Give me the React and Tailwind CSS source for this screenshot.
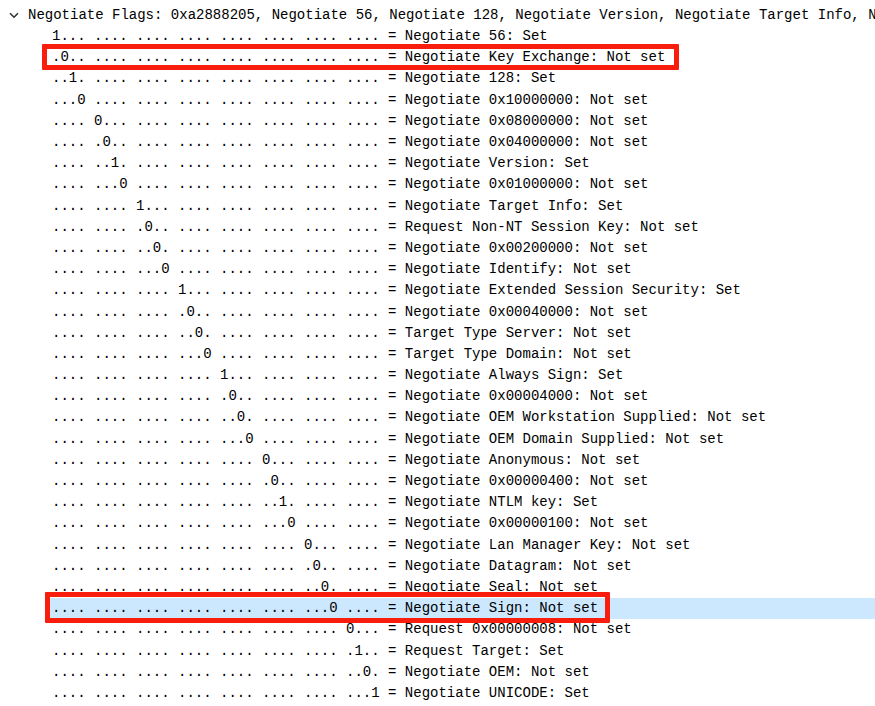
import React from "react";

const FLAGS = 0xa2888205;

const FIELDS = [
  "Negotiate 56",
  "Negotiate Key Exchange",
  "Negotiate 128",
  "Negotiate 0x10000000",
  "Negotiate 0x08000000",
  "Negotiate 0x04000000",
  "Negotiate Version",
  "Negotiate 0x01000000",
  "Negotiate Target Info",
  "Request Non-NT Session Key",
  "Negotiate 0x00200000",
  "Negotiate Identify",
  "Negotiate Extended Session Security",
  "Negotiate 0x00040000",
  "Target Type Server",
  "Target Type Domain",
  "Negotiate Always Sign",
  "Negotiate 0x00004000",
  "Negotiate OEM Workstation Supplied",
  "Negotiate OEM Domain Supplied",
  "Negotiate Anonymous",
  "Negotiate 0x00000400",
  "Negotiate NTLM key",
  "Negotiate 0x00000100",
  "Negotiate Lan Manager Key",
  "Negotiate Datagram",
  "Negotiate Seal",
  "Negotiate Sign",
  "Request 0x00000008",
  "Request Target",
  "Negotiate OEM",
  "Negotiate UNICODE",
];

// Build the dotted bit mask like ".... ..1. .... ...."
function bitMask(pos, value) {
  let out = "";
  for (let i = 0; i < 32; i++) {
    if (i > 0 && i % 4 === 0) out += " ";
    out += i === pos ? (value ? "1" : "0") : ".";
  }
  return out;
}

const rows = FIELDS.map((name, pos) => {
  const bit = 31 - pos;
  const value = (FLAGS >>> bit) & 1;
  return {
    name,
    text: `${bitMask(pos, value)} = ${name}: ${value ? "Set" : "Not set"}`,
  };
});

const HEADER =
  "Negotiate Flags: 0xa2888205, Negotiate 56, Negotiate 128, Negotiate Version, Negotiate Target Info, Negotiate Extended Session Security, Negotiate Always Sign, Negotiate NTLM key, Request Target, Negotiate UNICODE";

function Chevron() {
  return (
    <svg width="10" height="7" viewBox="0 0 10 7" className="shrink-0">
      <polyline
        points="1,1.2 5,5.2 9,1.2"
        fill="none"
        stroke="#333"
        strokeWidth="1.6"
      />
    </svg>
  );
}

export default function App() {
  const mono = { fontFamily: '"Liberation Mono", "DejaVu Sans Mono", monospace' };
  return (
    <div
      className="relative w-[875px] h-[706px] overflow-hidden bg-white text-black text-[14px]"
      style={mono}
    >
      <div className="flex flex-col pt-[1.5px]">
        {/* tail of the row above, mostly scrolled out of view */}
        <div className="h-[21.2px] mt-[-17.8px] leading-[21.2px] whitespace-pre pl-[27px] text-[#222]">
          {"                 0xa2888205"}
        </div>

        <div className="h-[21.2px] flex items-center whitespace-nowrap">
          <div className="w-[28px] shrink-0 flex justify-start pl-[9px]">
            <Chevron />
          </div>
          <span className="leading-[21.2px]">{HEADER}</span>
        </div>

        {rows.map((r) => {
          const selected = r.name === "Negotiate Sign";
          return (
            <div key={r.name} className="h-[21.2px] flex whitespace-pre">
              <div
                className={
                  selected
                    ? "ml-[48px] pl-[4px] flex-1 bg-[#cce8ff] leading-[21.2px]"
                    : "ml-[48px] pl-[4px] flex-1 leading-[21.2px]"
                }
              >
                {r.text}
              </div>
            </div>
          );
        })}
      </div>

      {/* annotation outlines */}
      <div className="absolute left-[42px] top-[44px] w-[637px] h-[26px] border-[5px] border-[#f81d0c] rounded-[1px]" />
      <div className="absolute left-[45px] top-[592px] w-[565px] h-[31px] border-[5px] border-[#f81d0c] rounded-[1px]" />
    </div>
  );
}
